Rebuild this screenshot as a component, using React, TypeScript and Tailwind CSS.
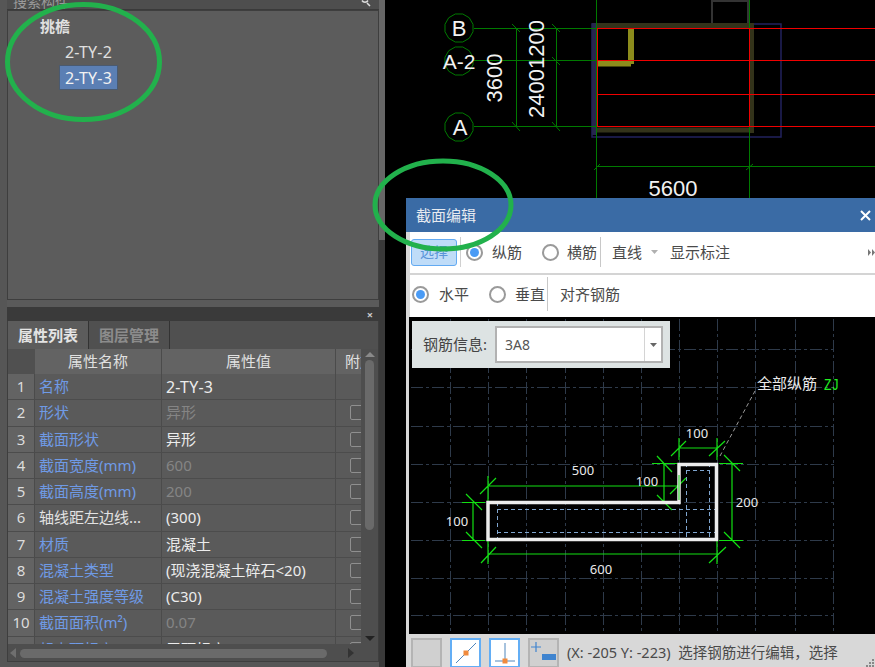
import React from "react";

const rows: [string, string, string, string, boolean][] = [
  ["1", "名称", "text-[#6f9ae6]", "2-TY-3", false],
  ["2", "形状", "text-[#6f9ae6]", "异形", true],
  ["3", "截面形状", "text-[#6f9ae6]", "异形", true],
  ["4", "截面宽度(mm)", "text-[#6f9ae6]", "600", true],
  ["5", "截面高度(mm)", "text-[#6f9ae6]", "200", true],
  ["6", "轴线距左边线...", "text-[#e2e2e2]", "(300)", true],
  ["7", "材质", "text-[#6f9ae6]", "混凝土", true],
  ["8", "混凝土类型", "text-[#6f9ae6]", "(现浇混凝土碎石<20)", true],
  ["9", "混凝土强度等级", "text-[#6f9ae6]", "(C30)", true],
  ["10", "截面面积(m²)", "text-[#6f9ae6]", "0.07", true],
  ["11", "起点顶标高(m)", "text-[#6f9ae6]", "层顶标高", true],
];
const dimValue = new Set(["2", "4", "5", "10"]);

function poly(cx: number, cy: number, r: number) {
  return Array.from({ length: 12 }, (_, i) => {
    const a = (Math.PI * 2 * i) / 12 + Math.PI / 12;
    return `${cx + r * Math.cos(a)},${cy + r * Math.sin(a)}`;
  }).join(" ");
}

function Plan() {
  return (
    <svg width="490" height="198" viewBox="385 0 490 198" className="block shrink-0">
      <path d="M712 23V1H748V23" fill="none" stroke="#333" strokeWidth="2" />
      <rect x="592" y="24" width="189" height="113" fill="none" stroke="#22225e" strokeWidth="1.5" />
      <rect x="592" y="23" width="5" height="112" fill="#26264e" />
      <path d="M597 25.5H754M751.5 23V133M597 130H754" fill="none" stroke="#33331a" strokeWidth="5" />
      <path d="M631 28V64M597 63.5H631" fill="none" stroke="#8c8c1c" strokeWidth="6" />
      <g stroke="#007a00" strokeWidth="1" fill="none" shapeRendering="crispEdges">
        <path d="M473.5 28.5H597M473.5 60.5H597M473.5 126.5H597" />
        <path d="M516.5 28V127M556.5 28V127" />
        <path d="M596.5 0V198M749.5 0V198M597 166.5H875" />
      </g>
      <g stroke="#007a00" strokeWidth="1" fill="none">
        <path d="M512 24L520 32M512 122L520 131M552 24L560 32M552 57L560 65M552 122L560 131" />
        <path d="M594 170L600 164M746 170L753 164" />
        <polygon points={poly(459, 28, 14.5)} />
        <polygon points={poly(459, 61, 14.5)} />
        <polygon points={poly(459, 127, 14.5)} />
      </g>
      <g stroke="#f00000" strokeWidth="1.2" fill="none" shapeRendering="crispEdges">
        <path d="M597 28.5H875M597 60.5H875M597 94.5H875M597 126.5H875M597.5 28V127M749.5 28V127" />
      </g>
      <g fill="#f2f2f2" fontFamily="'Liberation Sans', sans-serif" fontSize="22">
        <text x="459" y="36" textAnchor="middle">B</text>
        <text x="459" y="69" textAnchor="middle" fontSize="21">A-2</text>
        <text x="460" y="135" textAnchor="middle">A</text>
        <text x="673" y="196" textAnchor="middle" fontSize="22">5600</text>
        <text transform="translate(502 78) rotate(-90)" textAnchor="middle">3600</text>
        <text transform="translate(544 69) rotate(-90)" textAnchor="middle">24001200</text>
      </g>
    </svg>
  );
}

function Section() {
  const xs = [450, 488, 526, 565, 603, 641, 679, 717, 755, 795, 833];
  const ys = [349, 387, 426, 464, 502, 540, 578, 615];
  const green = "#12e012";
  return (
    <svg width="466" height="317" viewBox="409 317 466 317" className="block">
      <g stroke="#2e3a4a" strokeWidth="1" strokeDasharray="12 3 3 3" shapeRendering="crispEdges">
        {xs.map((x) => (
          <path key={x} d={`M${x + 0.5} 319V634`} />
        ))}
        {ys.map((y) => (
          <path key={y} d={`M411 ${y + 0.5}H834`} />
        ))}
      </g>
      <g stroke="#7fa5cf" strokeWidth="1" strokeDasharray="4 3" fill="none" shapeRendering="crispEdges">
        <path d="M497 502V540M497 509.5H717M497 532.5H717M686.5 463V540M709.5 463V540M686 470.5H709" />
      </g>
      <g stroke={green} strokeWidth="1.2" fill="none">
        <path d="M488 476V564M480 494L496 478M481 563L496 547M717 528V564M709 563L726 547M488 486H679" />
        <path d="M488 554H717" />
        <path d="M462 502.5H485M462 540.5H485M473 502V540M466 494L482 510M466 532L482 548" />
        <path d="M719 463.5H743M719 540.5H743M732 463V540M724 455L740 471M724 532L740 548" />
        <path d="M679 438V460M717 438V460M679 448H717M671 456L686 441M709 456L725 441" />
        <path d="M652 463.5H677M652 502.5H676M664 463V502M657 456L672 472M657 495L672 510M670 494L686 478" />
      </g>
      <path d="M488 502.5H679V464.5H716.5V539.5H488Z" fill="none" stroke="#ededed" strokeWidth="3.5" />
      <path d="M679 475V500" stroke="#7fe07f" strokeWidth="2" />
      <path d="M720 456L755 391" stroke="#9a9a9a" strokeWidth="1" strokeDasharray="4 3" />
      <g fill="#eaeaea" fontSize="13" fontFamily="'Noto Sans', sans-serif" textAnchor="middle">
        <text x="697" y="438">100</text>
        <text x="583" y="475">500</text>
        <text x="647" y="486">100</text>
        <text x="747" y="507">200</text>
        <text x="457" y="526">100</text>
        <text x="601" y="574">600</text>
      </g>
      <text x="757" y="389" fill="#eaeaea" fontSize="15" fontFamily="'Noto Sans CJK SC', sans-serif">全部纵筋</text>
      <text x="824" y="390" fill="#22f022" fontSize="16" fontFamily="'Liberation Mono', monospace" textLength={15} lengthAdjust="spacingAndGlyphs">ZJ</text>
    </svg>
  );
}

function Radio({ on }: { on?: boolean }) {
  return (
    <span className="flex h-[17px] w-[17px] shrink-0 items-center justify-center rounded-full border-2 border-[#9a9a9a] bg-white">
      {on && <span className="h-[9px] w-[9px] rounded-full bg-[#4a9bf5]" />}
    </span>
  );
}

function IconButton({ active, children }: { active?: boolean; children?: React.ReactNode }) {
  return (
    <span
      className={
        active
          ? "flex h-[30px] w-[31px] items-center justify-center border-2 border-[#63aef5] bg-white"
          : "flex h-[30px] w-[31px] items-center justify-center border-2 border-[#b4b4b4] bg-[#d0d0d0]"
      }
    >
      {children}
    </span>
  );
}

export default function App() {
  return (
    <div className="relative flex h-[667px] w-[875px] overflow-hidden bg-black text-[15px] leading-none [font-family:'Noto_Sans','Noto_Sans_CJK_SC',sans-serif]">
      {/* left dock */}
      <div className="flex h-full w-[385px] shrink-0 bg-[#565656]">
        <div className="flex w-[379px] flex-col pl-[7px]">
          <div className="flex h-[10px] items-end justify-between overflow-hidden border-b border-[#3a3a3a] bg-[#4e4e4e] pl-[6px] pr-[8px]">
            <span className="-mb-[1px] whitespace-nowrap text-[14px] leading-[16px] text-[#9a9a9a]">搜索构件...</span>
            <svg width="12" height="9" viewBox="0 0 12 9">
              <path d="M3 0.5A3.5 3.5 0 0 0 9 0.5M8 3L11 6" fill="none" stroke="#ddd" strokeWidth="1.5" />
            </svg>
          </div>
          <div className="h-[290px] border border-[#3e3e3e] bg-[#5c5c5c] pt-[5px]">
            <div className="pl-[32px] text-[15px] font-bold leading-[20px] text-[#e0e0e0]">挑檐</div>
            <div className="mt-[3px] pl-[51px]">
              <div className="flex h-[26px] w-[59px] items-center justify-center text-[#e0e0e0]"><span className="text-[16px] tracking-[0.2px]">2-TY-2</span></div>
              <div className="flex h-[25px] w-[59px] items-center justify-center border border-[#4a5a70] bg-[#5b7fb4] text-[#f2f2f2]"><span className="text-[16px] tracking-[0.2px]">2-TY-3</span></div>
            </div>
          </div>
          <div className="h-[7px] bg-[#5a5a5a]" />
          <div className="flex h-[14px] items-center justify-end bg-[#3a3a3a] pr-[6px]">
            <span className="text-[11px] font-bold leading-none text-[#c8c8c8]">×</span>
          </div>
          <div className="flex h-[28px] items-end border-x border-[#3e3e3e] bg-[#505050]">
            <div className="flex h-[28px] w-[81px] items-center justify-center border-r border-[#333] bg-[#5c5c5c] font-bold text-[#e4e4e4]">属性列表</div>
            <div className="flex h-[28px] w-[81px] items-center justify-center border-r border-[#333] font-bold text-[#8c8c8c]">图层管理</div>
          </div>
          <div className="relative h-[313px] overflow-hidden border-x border-b border-[#3e3e3e] bg-[#5a5a5a]">
            <div className="h-[295px] w-[353px] overflow-hidden">
              <div className="flex h-[25px] bg-[#636363] text-[#e0e0e0]">
                <div className="w-[27px] shrink-0 bg-[#505050]" />
                <div className="flex w-[127px] shrink-0 items-center justify-center border-r border-[#4b4b4b]">属性名称</div>
                <div className="flex w-[174px] shrink-0 items-center justify-center border-r border-[#4b4b4b]">属性值</div>
                <div className="flex w-[25px] shrink-0 items-center overflow-hidden pl-[9px] whitespace-nowrap">附加</div>
              </div>
              {rows.map(([n, name, color, value, box]) => (
                <div key={n} className="flex h-[26.25px] shrink-0 border-b border-[#4c4c4c] bg-[#5a5a5a]">
                  <div className="flex w-[27px] shrink-0 items-center justify-center border-r border-[#4b4b4b] bg-[#636363] text-[#dcdcdc]">{n}</div>
                  <div className={`flex w-[127px] shrink-0 items-center overflow-hidden whitespace-nowrap border-r border-[#4b4b4b] pl-[4px] ${color}`}>{name}</div>
                  <div
                    className={
                      dimValue.has(n)
                        ? "flex w-[174px] shrink-0 items-center overflow-hidden whitespace-nowrap border-r border-[#4b4b4b] pl-[4px] text-[#858585]"
                        : "flex w-[174px] shrink-0 items-center overflow-hidden whitespace-nowrap border-r border-[#4b4b4b] pl-[4px] text-[#ececec]"
                    }
                  >
                    {n === "1" ? <span className="text-[16px] tracking-[0.2px]">{value}</span> : value}
                  </div>
                  <div className="flex w-[25px] shrink-0 items-center overflow-hidden pl-[14px]">
                    {box && <span className="h-[15px] w-[15px] shrink-0 rounded-[2px] border border-[#8f8f8f] bg-[#565656]" />}
                  </div>
                </div>
              ))}
            </div>
            {/* vertical scrollbar */}
            <div className="absolute right-0 top-0 flex h-[295px] w-[17px] flex-col items-center justify-between bg-[#4e4e4e] py-[3px]">
              <svg width="10" height="5" viewBox="0 0 10 5"><path d="M5 0L10 5H0Z" fill="#8a8a8a" /></svg>
              <div className="absolute left-[4px] top-[11px] h-[170px] w-[9px] rounded-full bg-[#6a6a6a]" />
              <svg width="10" height="5" viewBox="0 0 10 5"><path d="M5 5L10 0H0Z" fill="#222" /></svg>
            </div>
            {/* horizontal scrollbar */}
            <div className="flex h-[17px] items-center justify-between bg-[#4e4e4e] px-[2px]">
              <svg width="6" height="10" viewBox="0 0 6 10"><path d="M0 5L6 0V10Z" fill="#6f6f6f" /></svg>
              <div className="absolute bottom-[3px] left-[12px] h-[9px] w-[307px] rounded-full bg-[#6a6a6a]" />
              <svg className="mr-[22px]" width="6" height="10" viewBox="0 0 6 10"><path d="M6 5L0 0V10Z" fill="#333" /></svg>
            </div>
          </div>
        </div>
        <div className="flex w-[6px] flex-col bg-[#3a3a3a]">
          <div className="h-[240px] bg-[#666]" />
        </div>
      </div>

      {/* right side */}
      <div className="flex min-w-0 flex-1 flex-col">
        <Plan />
        {/* dialog */}
        <div className="ml-[21px] flex flex-1 flex-col bg-[#d8d8d8] text-[#4a4a4a]">
          <div className="flex h-[34px] shrink-0 items-center justify-between bg-[#3a6ba5] pl-[10px] pr-[4px] text-[#e6eaf0]">
            <span className="text-[15px]">截面编辑</span>
            <svg width="11" height="11" viewBox="0 0 11 11"><path d="M1 1L10 10M10 1L1 10" stroke="#fff" strokeWidth="2" /></svg>
          </div>
          <div className="ml-[4px] flex h-[43px] shrink-0 items-center border-b-2 border-[#d4d4d4] bg-white pb-[1px] pl-[1px]">
            <div className="flex h-[27px] w-[46px] items-center justify-center rounded-[3px] border border-[#62aaf2] bg-[#bfdcf8] text-[14px] text-[#5a94d8]">选择</div>
            <div className="ml-[3px] h-[30px] w-px bg-[#d0d0d0]" />
            <div className="ml-[5px]"><Radio on /></div>
            <span className="ml-[9px] w-[30px] whitespace-nowrap">纵筋</span>
            <div className="ml-[20px]"><Radio /></div>
            <span className="ml-[8px] w-[30px] whitespace-nowrap">横筋</span>
            <div className="ml-[3px] h-[30px] w-px bg-[#c8c8c8]" />
            <span className="ml-[11px] w-[31px] whitespace-nowrap">直线</span>
            <svg className="ml-[8px]" width="7" height="4" viewBox="0 0 7 4"><path d="M0 0H7L3.5 4Z" fill="#b0b0b0" /></svg>
            <span className="ml-[12px] whitespace-nowrap">显示标注</span>
            <svg className="ml-auto" width="7" height="7" viewBox="0 0 7 7"><path d="M0 0L3 3.5L0 7ZM4 0L7 3.5L4 7Z" fill="#777" /></svg>
          </div>
          <div className="ml-[4px] flex h-[42px] shrink-0 items-center bg-white pb-[4px] pl-[2px]">
            <Radio on />
            <span className="ml-[10px] w-[30px] whitespace-nowrap">水平</span>
            <div className="ml-[20px]"><Radio /></div>
            <span className="ml-[9px] w-[30px] whitespace-nowrap">垂直</span>
            <div className="ml-[2px] h-[34px] w-px bg-[#c8c8c8]" />
            <span className="ml-[12px] whitespace-nowrap">对齐钢筋</span>
          </div>
          <div className="relative ml-[3px] h-[317px] shrink-0 overflow-hidden bg-black">
            <Section />
            <div className="absolute left-[3px] top-[4px] flex h-[47px] w-[258px] items-center bg-[#dde3e3] pl-[11px]">
              <span className="w-[72px] whitespace-nowrap text-[#444]">钢筋信息:</span>
              <div className="flex h-[37px] w-[168px] items-stretch border-2 border-[#b2b2b2] bg-white">
                <span className="flex flex-1 items-center pl-[8px] text-[14px] text-[#555]">3A8</span>
                <span className="flex w-[17px] items-center justify-center border-l border-[#d4d4d4]">
                  <svg width="7" height="4" viewBox="0 0 7 4"><path d="M0 0H7L3.5 4Z" fill="#666" /></svg>
                </span>
              </div>
            </div>
          </div>
          <div className="relative flex flex-1 items-start gap-[8px] bg-[#d8d8d8] pl-[5px] pt-[4px]">
            <IconButton />
            <IconButton active>
              <svg width="24" height="24" viewBox="0 0 24 24">
                <path d="M2 22L22 2" stroke="#4f86bd" strokeWidth="1" />
                <rect x="9.5" y="9.5" width="5" height="5" fill="#f08a3c" />
              </svg>
            </IconButton>
            <IconButton active>
              <svg width="24" height="24" viewBox="0 0 24 24">
                <path d="M12 2V20M2 20H22" stroke="#4f86bd" strokeWidth="1" />
                <rect x="9.5" y="17.5" width="5" height="5" fill="#f08a3c" />
              </svg>
            </IconButton>
            <IconButton>
              <svg width="26" height="24" viewBox="0 0 26 24">
                <path d="M5 1V11M0 6H10" stroke="#3f84cf" strokeWidth="1.2" />
                <rect x="11" y="13" width="14" height="6" fill="#3f84cf" />
              </svg>
            </IconButton>
            <span className="mt-[7px] whitespace-nowrap text-[14.5px] text-[#4a4a4a]">(X: -205 Y: -223)&nbsp; 选择钢筋进行编辑，选择</span>
            <svg className="absolute bottom-[1px] right-[1px]" width="9" height="9" viewBox="0 0 9 9">
              <path d="M7 1h2v2H7zM4 4h2v2H4zM7 4h2v2H7zM1 7h2v2H1zM4 7h2v2H4zM7 7h2v2H7z" fill="#888" />
            </svg>
          </div>
        </div>
      </div>

      {/* hand-drawn annotation circles */}
      <svg className="pointer-events-none absolute left-0 top-0" width="875" height="667" viewBox="0 0 875 667">
        <ellipse cx="83.5" cy="62" rx="76" ry="57.5" fill="none" stroke="#22b14c" strokeWidth="5" />
        <ellipse cx="443" cy="205" rx="68" ry="44" fill="none" stroke="#22b14c" strokeWidth="5" />
      </svg>
    </div>
  );
}
